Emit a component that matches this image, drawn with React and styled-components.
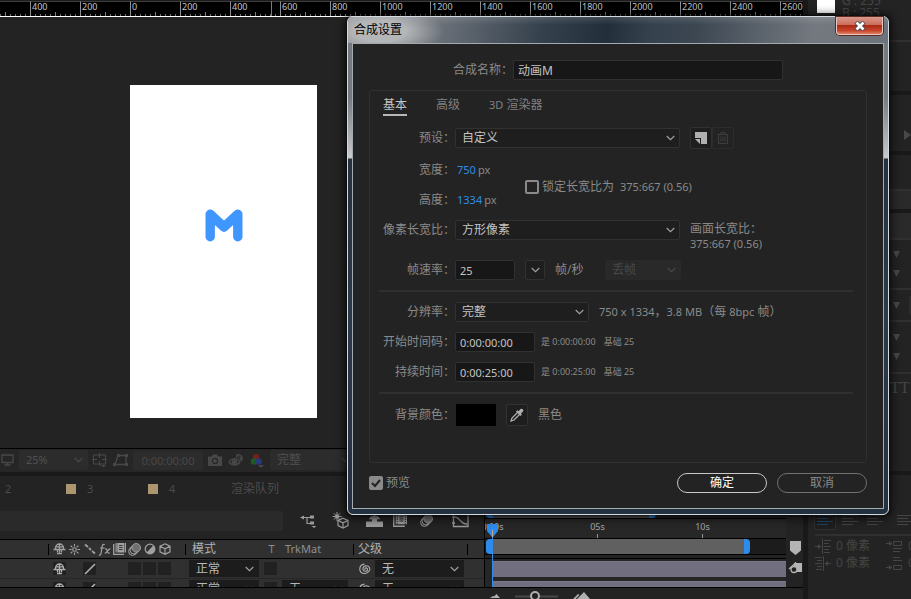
import { useState } from "react";
import styled, { createGlobalStyle, css } from "styled-components";

const GlobalStyle = createGlobalStyle`
  *, *::before, *::after {
    box-sizing: border-box;
  }
  body {
    margin: 0;
    background: #232323;
    overflow: hidden;
  }
  body, button, input, select {
    font-family: "Noto Sans", "Noto Sans CJK SC", sans-serif;
    font-size: 11px;
    line-height: 16px;
  }
  button, input, select {
    margin: 0;
    outline: none;
  }
  svg {
    display: block;
    flex: none;
  }
`;

const Page = styled.div`
  position: relative;
  display: flex;
  height: 100vh;
  color: #8a8a8a;
`;

const Main = styled.main`
  flex: 1;
  min-width: 0;
  display: flex;
  flex-direction: column;
  border-right: 5px solid #191919;
`;

/* ---------- viewer ---------- */

const Ruler = styled.div`
  position: relative;
  height: 17px;
  display: flex;
  overflow: hidden;
  background: #000;
  border-top: 1px solid #1c1c1c;
  border-bottom: 1px solid #fff;
`;

const RulerCell = styled.span`
  flex: none;
  width: 50px;
  height: 15px;
  padding-left: 1px;
  border-left: 1px solid #909090;
  border-top: 1px solid #3c3c3c;
  font-size: 9px;
  line-height: 9px;
  color: #c4c4c4;
  background: linear-gradient(#808080, #808080) 24px 100% / 1px 4px no-repeat,
    repeating-linear-gradient(90deg, transparent 0 4px, #707070 4px 5px) 0 100% / 100% 2px no-repeat;

  &:first-child {
    margin-left: -20px;
  }
`;

const RulerCursor = styled.i`
  position: absolute;
  left: 271px;
  top: 0;
  width: 1px;
  height: 100%;
  background: #2d8ceb;
`;

const Viewport = styled.div`
  flex: 1;
  min-height: 0;
  padding: 68px 0 0 130px;
`;

const Canvas = styled.div`
  width: 187px;
  height: 333px;
  padding-top: 124px;
  display: flex;
  justify-content: center;
  align-items: flex-start;
  background: #fff;
`;

const ViewerBar = styled.div`
  height: 28px;
  display: flex;
  align-items: center;
  gap: 4px;
  padding-bottom: 1px;
  border-top: 1px solid #000;
  border-bottom: 4px solid #191919;
  background: #262626;
  color: #484848;
`;

const BarIcon = styled.span`
  flex: none;
  width: ${({ $w }) => $w || 18}px;
  display: flex;
  justify-content: center;
`;

const BarTime = styled.span`
  flex: none;
  width: 70px;
  height: 19px;
  line-height: 19px;
  text-align: center;
  border-radius: 2px;
  background: #2c2c2c;
`;

/* ---------- form parts ---------- */

const fieldBox = css`
  height: 20px;
  border: 1px solid #313131;
  border-radius: 2px;
  background: #171717;
  color: #c4c4c4;
`;

const TextField = styled.input`
  ${fieldBox}
  width: ${({ $w }) => $w}px;
  padding: 0 4px;
  font-size: ${({ $cjk }) => ($cjk ? 12 : 11)}px;
`;

const SelectBox = styled.span`
  flex: none;
  display: grid;
  align-items: center;
  width: ${({ $w }) => $w}px;

  > * {
    grid-area: 1 / 1;
  }
  > svg {
    justify-self: end;
    margin-right: 5px;
    pointer-events: none;
  }
`;

const variants = {
  field: css`
    background: #1e1e1e;
    border-color: #313131;
    color: #c4c4c4;
  `,
  disabled: css`
    background: #292929;
    border-color: #292929;
    color: #484848;
    opacity: 1;
  `,
  bar: css`
    background: #2c2c2c;
    border-color: #2c2c2c;
    color: #505050;
  `,
  cell: css`
    height: 17px;
    background: #1c1c1c;
    border-color: #1c1c1c;
    border-radius: 0;
    color: #b8b8b8;
  `,
};

const NativeSelect = styled.select`
  ${fieldBox}
  width: 100%;
  padding: 0 18px 0 6px;
  font-size: ${({ $latin }) => ($latin ? 11 : 12)}px;
  line-height: 16px;
  appearance: none;
  ${({ $variant }) => variants[$variant]}
`;

const Chevron = ({ color = "#a0a0a0" }) => (
  <svg width="9" height="6" viewBox="0 0 9 6" fill="none" stroke={color} strokeWidth="1.2">
    <path d="M.7 1l3.8 3.6L8.3 1" />
  </svg>
);

const Select = ({ width, variant = "field", label, id, value, latin }) => {
  const dim = variant === "bar" || variant === "disabled";
  return (
    <SelectBox $w={width}>
      <NativeSelect
        id={id}
        aria-label={label}
        $variant={variant}
        $latin={latin}
        disabled={variant === "disabled"}
        defaultValue={value}
      >
        <option>{value}</option>
      </NativeSelect>
      <Chevron color={dim ? "#484848" : "#a0a0a0"} />
    </SelectBox>
  );
};

/* ---------- timeline ---------- */

const TabStrip = styled.div`
  height: 26px;
  display: flex;
  align-items: center;
  padding-left: 5px;
  color: #4c4c4c;
`;

const CompTab = styled.a`
  display: flex;
  align-items: center;
  gap: 11px;
  width: ${({ $w }) => $w}px;
  color: inherit;
  text-decoration: none;
  font-size: ${({ $cjk }) => ($cjk ? 12 : 11)}px;

  &::before {
    content: "";
    display: ${({ $swatch }) => ($swatch ? "block" : "none")};
    width: 10px;
    height: 10px;
    background: #ab9670;
  }
`;

const Timeline = styled.div`
  display: flex;
  height: 86px;
  border-bottom: 1px solid #000;
`;

const Layers = styled.div`
  flex: none;
  width: 485px;
  display: flex;
  flex-direction: column;
  overflow: hidden;
  border-right: 1px solid #000;
`;

const LayerTools = styled.div`
  height: 37px;
  flex: none;
  display: flex;
  align-items: center;
  color: #9a9a9a;
`;

const SearchField = styled.input`
  width: 283px;
  height: 20px;
  margin-right: 8px;
  border: 0;
  border-radius: 0 2px 2px 0;
  background: #2a2a2a;
  color: #b8b8b8;
`;

const columns = css`
  display: grid;
  grid-template-columns: 52px repeat(8, 15px) 17px 70px 4px 14px 5px 68px 5px 20px 89px 8px;
  align-items: center;
`;

const HeaderRow = styled.div`
  ${columns}
  flex: none;
  height: 20px;
  border-top: 1px solid #000;
  border-bottom: 1px solid #000;
  background: #303030;
  color: #a0a0a0;

  > svg {
    justify-self: center;
  }
`;

const Divider = styled.i`
  justify-self: ${({ $end }) => ($end ? "end" : "start")};
  width: 1px;
  height: 11px;
  margin: 0 3px;
  background: #000;
`;

const HeaderText = styled.span`
  padding-left: 3px;
  justify-self: ${({ $center }) => ($center ? "center" : "start")};
  font-size: ${({ $cjk }) => ($cjk ? 12 : 11)}px;
  white-space: nowrap;
  color: ${({ $cjk }) => ($cjk ? "#b0b0b0" : "#8e8e8e")};
`;

const LayerRow = styled.div`
  ${columns}
  flex: none;
  height: 20px;
  border-bottom: 1px solid #262626;
  background: #303030;
  color: #b0b0b0;
`;

const SwitchCell = styled.span`
  width: 13px;
  height: 13px;
  justify-self: center;
  display: grid;
  place-items: center;
  background: ${({ $plain }) => ($plain ? "none" : "#212121")};
`;

const Tracks = styled.div`
  position: relative;
  flex: 1;
  min-width: 0;
  display: flex;
  flex-direction: column;
  overflow: hidden;
`;

const Navigator = styled.div`
  flex: none;
  height: 17px;
  display: flex;
  align-items: flex-end;
  padding-left: 1px;
  border-bottom: 1px solid #000;

  &::before {
    content: "";
    width: 170px;
    height: 8px;
    border: solid #2d8ceb;
    border-width: 0 7px;
    border-radius: 4px;
    background: #555;
  }
`;

const TimeRuler = styled.div`
  flex: none;
  height: 20px;
  display: flex;
  border-bottom: 1px solid #000;
  background: #272727;
`;

const TimeMark = styled.span`
  flex: none;
  width: 105px;
  display: flex;
  flex-direction: column;
  align-items: center;
  font-size: 9px;
  line-height: 15px;
  color: #a8a8a8;

  &::after {
    content: "";
    width: 1px;
    height: 4px;
    background: #909090;
  }
  &:first-child {
    margin-left: -45px;
  }
`;

const WorkArea = styled.div`
  flex: none;
  height: 16px;
  padding-left: 1px;
  border-bottom: 1px solid #000;
  background: #1c1c1c;

  &::before {
    content: "";
    display: block;
    width: 264px;
    height: 15px;
    border: solid #2d8ceb;
    border-width: 0 6px;
    border-radius: 4px;
    background: #606060;
  }
`;

const TrackRow = styled.div`
  flex: none;
  height: ${({ $gap }) => 16 + $gap}px;
  padding: ${({ $gap }) => $gap}px 0 0 7px;
  background: #262626;

  &::before {
    content: "";
    display: block;
    height: 16px;
    background: #716e80;
    border-top: 1px solid #7a778a;
  }
`;

const TrackGap = styled.i`
  flex: none;
  height: 4px;
  border-bottom: 1px solid #000;
`;

const Playhead = styled.svg`
  position: absolute;
  left: 1px;
  top: 22px;
`;

const MarkerRail = styled.div`
  flex: none;
  width: 17px;
  padding: 39px 0 0 1px;
  display: flex;
  flex-direction: column;
  align-items: center;
  gap: 6px;
  color: #b4b4b4;
`;

const ZoomBar = styled.div`
  height: 11px;
  flex: none;
  display: flex;
  align-items: flex-end;
  gap: 15px;
  padding-left: 490px;
  overflow: hidden;
  color: #b0b0b0;
`;

/* ---------- side panels ---------- */

const Side = styled.aside`
  flex: none;
  width: 103px;
  display: flex;
  flex-direction: column;
  overflow: hidden;
  color: #454545;
`;

const SidePanel = styled.section`
  flex: none;
  height: ${({ $h }) => $h}px;
  display: flex;
  flex-direction: column;
  justify-content: space-evenly;
  padding: ${({ $low }) => ($low ? 24 : 0)}px 0 0 85px;
  border-bottom: ${({ $edge }) => ($edge ? "4px solid #191919" : "2px solid #303030")};
  background: ${({ $light }) => ($light ? "#2a2a2a" : "none")};
`;

const ToggleLine = styled.div`
  display: flex;
  align-items: center;
  gap: 8px;

  &::after {
    content: "";
    flex: 1;
    height: 19px;
    border-radius: 2px 0 0 2px;
    background: #2c2c2c;
  }
`;

const ColorReadout = styled.section`
  flex: none;
  height: 42px;
  display: flex;
  gap: 7px;
  padding-left: 9px;
  border-bottom: 2px solid #303030;
  line-height: 12px;
`;

const ColorChip = styled.i`
  width: 18px;
  height: 13px;
  background: #fff;
`;

const ChannelList = styled.div`
  margin-top: -5px;
  font-size: 12px;
`;

const TypeRow = styled.div`
  flex: none;
  height: 101px;
  padding: 6px 0 0 82px;
  border-bottom: 4px solid #191919;
  font: 16px/16px "Liberation Serif", serif;
`;

const AlignRow = styled.div`
  flex: none;
  height: 59px;
  display: flex;
  align-items: flex-end;
  gap: 3px;
  padding: 0 0 4px 6px;

  > :last-child {
    margin-left: 5px;
  }
`;

const AlignButton = styled.button`
  flex: none;
  width: 22px;
  height: 20px;
  padding: 0;
  display: grid;
  place-items: center;
  border: 1px solid ${({ $on }) => ($on ? "#303030" : "transparent")};
  border-radius: 2px;
  background: ${({ $on }) => ($on ? "#1e1e1e" : "none")};
  color: ${({ $on }) => ($on ? "#1c4566" : "#454545")};
`;

const IndentGrid = styled.div`
  display: grid;
  grid-template-columns: 16px 45px 17px 14px;
  gap: 1px 5px;
  align-items: center;
  margin-left: 7px;
  border-top: 2px solid #303030;
  padding-top: 2px;
  font-size: 12px;
`;

/* ---------- dialog ---------- */

const Dialog = styled.section`
  position: absolute;
  left: 347px;
  top: 16px;
  width: 542px;
  padding: 0 4px 5px;
  border: 1px solid #d4dade;
  border-radius: 6px;
  box-shadow: 0 0 2px #000, 0 1px 10px 2px rgba(0, 0, 0, 0.75);
  background: linear-gradient(#747a80 0, #757a80 80px, #c8cacc 141px, #243240 142px, #2b3a48 60%, #233040 100%);
`;

const TitleBar = styled.header`
  display: flex;
  justify-content: space-between;
  align-items: flex-start;
  height: 26px;
  margin: 0 -4px;
  padding: 0 5px 0 6px;
  border-radius: 5px 5px 0 0;
  color: #000;
  background: radial-gradient(ellipse 64px 26px at 32px 14px, #b4b6b8 40%, transparent),
    linear-gradient(180deg, rgba(255, 255, 255, 0.12), transparent 30%),
    linear-gradient(100deg, #868a8e 0, #686e76 18%, #35414d 36%, #222e3a 48%, #35414d 56%, #3b4651 64%, #747980 86%, #6d737a 100%);
`;

const Title = styled.h1`
  margin: 0;
  font-size: 12px;
  font-weight: 400;
  line-height: 26px;
`;

const CloseButton = styled.button`
  width: 47px;
  height: 18px;
  padding: 0;
  display: grid;
  place-items: center;
  border: 1px solid #e6c8c2;
  border-top: 0;
  border-radius: 0 0 4px 4px;
  box-shadow: 0 0 0 1px #5a2a24;
  background: linear-gradient(#d99a8c 0, #cc6a58 48%, #ab2a14 50%, #c8452c 80%, #dd7f60 100%);
`;

const Client = styled.div`
  padding: 16px 16px 15px;
  border: 1px solid #a4abb0;
  background: #232323;
`;

const NameRow = styled.div`
  display: grid;
  grid-template-columns: 144px auto;
  justify-content: start;
  align-items: center;
  margin-bottom: 10px;
`;

const Label = styled.label`
  font-size: 12px;
  text-align: right;
  white-space: nowrap;
`;

const Group = styled.div`
  border: 1px solid #303030;
  border-radius: 3px;
  height: 373px;
  padding: 4px 13px 0 9px;
`;

const Tabs = styled.div`
  display: flex;
  gap: 29px;
  padding-left: 4px;
  margin-bottom: 12px;
`;

const Tab = styled.button`
  padding: 0;
  height: 21px;
  border: 0;
  border-bottom: 2px solid ${({ $on }) => ($on ? "#b8b8b8" : "transparent")};
  background: none;
  color: ${({ $on }) => ($on ? "#c4c4c4" : "#808080")};
  font-size: 12px;
`;

const Row = styled.div`
  display: grid;
  grid-template-columns: 76px 1fr;
  align-items: center;
  align-content: center;
  height: ${({ $h }) => $h || 20}px;
  margin-bottom: ${({ $gap }) => $gap || 10}px;
`;

const Fields = styled.div`
  display: flex;
  align-items: center;
  gap: 10px;
`;

const SizeBlock = styled.div`
  display: grid;
  grid-template-columns: 146px auto;
  justify-content: start;
  align-items: center;

  > label {
    margin-bottom: 6px;
  }
`;

const HotValue = styled.input`
  field-sizing: content;
  padding: 0 0 0 2px;
  border: 0;
  background: none;
  color: #2d8ceb;
`;

const Unit = styled.span`
  margin-left: -8px;
`;

const Text = styled.span`
  font-size: 12px;
  white-space: nowrap;
`;

const AspectInfo = styled.div`
  padding-top: 12px;
  font-size: 12px;
  line-height: 15px;
  white-space: nowrap;
`;

const Num = styled.span`
  font-size: 11px;
`;

const Note = styled.span`
  display: flex;
  gap: 8px;
  margin-left: -4px;
  font-size: 9px;
  white-space: nowrap;
`;

const Rule = styled.hr`
  height: 2px;
  margin: 0 0 10px;
  border: 0;
  background: #303030;
`;

const Check = styled.label`
  display: flex;
  align-items: center;
  gap: 3px;
  font-size: 12px;
  white-space: nowrap;
`;

const CheckInput = styled.input`
  appearance: none;
  width: 14px;
  height: 14px;
  border: 2px solid #8a8a8a;
  border-radius: 2px;

  &:checked {
    background: #8a8a8a
      url("data:image/svg+xml,%3Csvg xmlns='http://www.w3.org/2000/svg' width='10' height='10' fill='none' stroke='%23222' stroke-width='2'%3E%3Cpath d='M1 5l3 3 5-6'/%3E%3C/svg%3E")
      center no-repeat;
  }
`;

const IconButton = styled.button`
  flex: none;
  width: ${({ $w }) => $w || 22}px;
  height: ${({ $w }) => $w || 22}px;
  padding: 0;
  display: grid;
  place-items: center;
  border: 1px solid ${({ $dim }) => ($dim ? "#2c2c2c" : "#313131")};
  border-radius: 2px;
  background: ${({ $dim }) => ($dim ? "#232323" : "#1e1e1e")};
  color: ${({ $dim }) => ($dim ? "#3e3e3e" : "#b0b0b0")};
`;

const ButtonPair = styled.div`
  display: flex;
`;

const Swatch = styled.button`
  width: 40px;
  height: 22px;
  margin-left: 1px;
  padding: 0;
  border: 0;
  background: #000;
`;

const Footer = styled.footer`
  display: flex;
  align-items: center;
  gap: 10px;
  margin-top: 10px;

  > :first-child {
    margin-right: auto;
  }
`;

const PillButton = styled.button`
  width: 90px;
  height: 20px;
  padding: 0;
  border: ${({ $primary }) => ($primary ? "1px solid #c8c8c8" : "1px solid #707070")};
  border-radius: 10px;
  background: none;
  color: ${({ $primary }) => ($primary ? "#fff" : "#8a8a8a")};
  font-size: 12px;
`;

/* ---------- icons ---------- */

const Glyph = ({ w = 14, h = w, children, ...rest }) => (
  <svg
    width={w}
    height={h}
    viewBox={`0 0 ${w} ${h}`}
    fill="none"
    stroke="currentColor"
    strokeWidth="1.3"
    aria-hidden="true"
    {...rest}
  >
    {children}
  </svg>
);

const ShyIcon = () => (
  <Glyph w={13} h={12}>
    <path d="M2.5 6V4.8a4 3.8 0 018 0V6M6.5 1v10M2.5 3.8h8M.5 6.5h12M4.5 6.5v3M8.5 6.5v3M4 10.6h5" />
  </Glyph>
);

const SunIcon = () => (
  <Glyph w={11} strokeWidth="1.1">
    <circle cx="5.5" cy="5.5" r="1.8" />
    <path d="M5.5 0v2.6M5.5 8.4V11M0 5.5h2.6M8.4 5.5H11M1.6 1.6l1.8 1.8M7.6 7.6l1.8 1.8M9.4 1.6L7.6 3.4M3.4 7.6L1.6 9.4" />
  </Glyph>
);

const QualityIcon = () => (
  <Glyph w={12} strokeWidth="1.8">
    <path d="M1 1.5l3 2.5M5 5l2 2M8 8l3 2.5" />
  </Glyph>
);

const SlashIcon = () => (
  <Glyph w={12} strokeWidth="1.6">
    <path d="M1 11L11 1" />
  </Glyph>
);

const FxIcon = () => (
  <Glyph w={13} h={13} strokeWidth="1.2">
    <path d="M6.8 1.6C5.4.8 4.6 1.6 4.3 3L3 10.4C2.7 12 1.8 12.4.8 12M2 5h4.6M7 6c1.6-.8 1.8.6 2.4 2.4.5 1.8 1 2.2 2.4 1.4M12.4 5.6C10.2 6 9 9.4 6.8 10.4" />
  </Glyph>
);

const FilmIcon = ({ w = 13 }) => (
  <Glyph w={13} h={12} width={w} height={w - 1}>
    <path d="M.7 1v10.3H11" />
    <rect x="2.5" y="0" width="10.5" height="9.5" fill="currentColor" stroke="none" />
    <path d="M4 .5v9M11.5.5v9" stroke="#262626" strokeWidth="1" strokeDasharray="1 1" />
    <path d="M6 2.5h3.6M6 4.5h3.6M6 6.5h3.6" stroke="#383838" strokeWidth="1" />
  </Glyph>
);

const BlurIcon = () => (
  <Glyph w={13} h={13} strokeWidth="1">
    <circle cx="4.6" cy="8.4" r="4" />
    <circle cx="6" cy="7" r="4" />
    <circle cx="8.2" cy="4.8" r="4.3" fill="#707070" />
  </Glyph>
);

const AdjustIcon = () => (
  <Glyph w={12}>
    <circle cx="6" cy="6" r="4.8" />
    <path d="M2.6 9.4a4.8 4.8 0 006.8-6.8z" fill="currentColor" stroke="none" />
  </Glyph>
);

const CubeIcon = () => (
  <Glyph w={12} strokeWidth="1.2">
    <path d="M6 .8l5 2.4v5.6L6 11.3 1 8.8V3.2zM1 3.2l5 2.6 5-2.6M6 5.8v5.5" />
  </Glyph>
);

const SwirlIcon = () => (
  <Glyph w={13} h={12} strokeWidth="1.1">
    <path d="M6.3 6.6c-1-.6-.2-2 1-1.7 1.9.5 1.5 3.4-.8 3.4-3.6 0-3.6-5.4.6-5.6 3.3 0 4.5 2.9 3.2 5.1-1.2 2-3.2 3-5.3 2.7C2.5 10.2.8 8.3.8 6c0-2.7 2-4.6 4.6-4.9" />
  </Glyph>
);

const FlowIcon = () => (
  <Glyph w={17} h={14} strokeWidth="1.2">
    <path d="M2 3.5h9M8 3.5v6h4" />
    <path d="M1 3.5l4-2v4zM11 1.4h4v3.2h-4zM11 7.4h4v3.2h-4zM12.5 12h5l-2.5 2z" fill="currentColor" stroke="none" />
  </Glyph>
);

const DraftIcon = () => (
  <Glyph w={17} h={17} strokeWidth="1.2">
    <path d="M5 0v9M.6 4.5h9M2 1.4l6 6.2M8 1.4L2 7.6" strokeWidth="1" />
    <circle cx="5" cy="4.5" r="2" fill="currentColor" stroke="none" />
    <path d="M11 6.2l5 2.2v5.2l-5 2.4-5-2.4V8.4z" fill="#232323" />
    <path d="M6 8.4l5 2.4 5-2.4M11 10.8V16" />
  </Glyph>
);

const ShyToolIcon = () => (
  <Glyph w={17} h={14}>
    <path d="M0 7.5h6V5h5v2.5h6V13H0z" fill="currentColor" stroke="none" />
    <path d="M4 4.5a5 4 0 019 0zM8.5 1v10" />
  </Glyph>
);

const GraphIcon = () => (
  <Glyph w={17} h={14}>
    <path d="M1.5 0v12.5H16V0M0 3h3M0 9h3" />
    <path d="M3 3c5 0 5 7 12 7" />
  </Glyph>
);

const AlignIcon = () => (
  <Glyph w={16} h={10} strokeWidth="1" shapeRendering="crispEdges">
    <path d="M0 .5h16M0 3.5h11M0 6.5h16M0 9.5h11" />
  </Glyph>
);

const IndentIcon = ({ flip }) => (
  <Glyph w={16} h={15} strokeWidth="1" transform={flip ? "scale(-1 1)" : undefined}>
    <path d="M0 7.5h5M7.5 0v15M9 1.5h7M9 4.5h5M9 7.5h7M9 10.5h5M9 13.5h6" />
    <path d="M3 5l3.4 2.5L3 10z" fill="currentColor" stroke="none" />
  </Glyph>
);

const SpaceIcon = ({ flip }) => (
  <Glyph w={17} h={15} strokeWidth="1">
    {flip ? (
      <>
        <path d="M0 11.5h4M7.5 9.5h8v4h-8zM7 1.5h7M7 4.5h9" />
        <path d="M3 9l3.4 2.5L3 14z" fill="currentColor" stroke="none" />
      </>
    ) : (
      <>
        <path d="M0 4.5h4M7.5 2.5h8v4h-8zM7 9.5h9M7 12.5h7" />
        <path d="M3 2l3.4 2.5L3 7z" fill="currentColor" stroke="none" />
      </>
    )}
  </Glyph>
);

const Triangle = () => (
  <svg width="8" height="7" viewBox="0 0 8 7" fill="#484848">
    <path d="M0 0h7L3.5 7z" />
  </svg>
);

/* ---------- sections ---------- */

const RULER_MARKS = ["", 400, 200, 0, 200, 400, 600, 800, 1000, 1200, 1400, 1600, 1800, 2000, 2200, 2400, 2600];

const Viewer = () => (
  <>
    <Ruler>
      {RULER_MARKS.map((mark, i) => (
        <RulerCell key={i}>{mark}</RulerCell>
      ))}
      <RulerCursor />
    </Ruler>
    <Viewport>
      <Canvas>
        <svg width="38" height="33" viewBox="0 0 38 33" fill="none" role="img" aria-label="M">
          <path
            d="M5.2 27.8V5.2L19 18 32.8 5.2v22.6"
            stroke="#4096ff"
            strokeWidth="9.4"
            strokeLinecap="round"
            strokeLinejoin="round"
          />
        </svg>
      </Canvas>
    </Viewport>
    <ViewerBar>
      <BarIcon $w={15}>
        <Glyph w={13} h={12}>
          <path d="M1 1h11v7.5H1zM6.5 8.5V11M3.5 11h6" />
        </Glyph>
      </BarIcon>
      <Select width={69} variant="bar" label="放大率" value="25%" latin />
      <BarIcon $w={15}>
        <Glyph w={15} h={15}>
          <path d="M1.5 2h12v9h-12zM7.5 0v5M7.5 8v5M0 6.5h5M10 6.5h5" strokeWidth="1" />
          <path d="M9 12h5l-2.5 2.5z" fill="currentColor" stroke="none" />
        </Glyph>
      </BarIcon>
      <BarIcon>
        <Glyph w={15} h={14}>
          <path d="M2 11.5L5 2.5h8v9z" />
          <path d="M0 10h3v3H0zM4 1h3v3H4zM12 1h3v3h-3zM12 10h3v3h-3z" fill="currentColor" stroke="none" />
        </Glyph>
      </BarIcon>
      <BarTime>0:00:00:00</BarTime>
      <BarIcon $w={15}>
        <Glyph w={14} h={12}>
          <path d="M0 2.5h4L5 .5h4l1 2h4V12H0z" fill="currentColor" stroke="none" />
          <circle cx="7" cy="7" r="2.6" stroke="#262626" />
        </Glyph>
      </BarIcon>
      <BarIcon>
        <Glyph w={15} h={14}>
          <path d="M1 9c3-4.5 8-4.5 11 0-3 4-8 4-11 0z" />
          <circle cx="6.5" cy="9" r="2" fill="currentColor" />
          <path d="M8 2.5L9 1h3l1 1.5h1.5V8H13C12 6 10.5 5 8 4.5z" fill="currentColor" stroke="none" />
          <circle cx="11" cy="4" r="1.2" stroke="#262626" strokeWidth="1" />
        </Glyph>
      </BarIcon>
      <BarIcon>
        <Glyph w={14} h={15} stroke="none">
          <circle cx="6" cy="4" r="3" fill="#7a1f1c" />
          <circle cx="4" cy="8.5" r="3.2" fill="#1f5a22" />
          <circle cx="8.5" cy="8.5" r="3.2" fill="#283a78" />
          <path d="M8 12h6l-3 3z" fill="currentColor" />
        </Glyph>
      </BarIcon>
      <Select width={85} variant="bar" label="分辨率" value="完整" />
    </ViewerBar>
  </>
);

const Layer = ({ matte }) => (
  <LayerRow>
    <i />
    <SwitchCell>
      <ShyIcon />
    </SwitchCell>
    <i />
    <SwitchCell>
      <SlashIcon />
    </SwitchCell>
    <i />
    <i />
    <SwitchCell />
    <SwitchCell />
    <SwitchCell />
    <i />
    <Select width={70} variant="cell" label="模式" value="正常" />
    <i />
    <SwitchCell />
    <i />
    {matte ? <Select width={66} variant="cell" label="TrkMat" value="无" /> : <i />}
    <i />
    <SwitchCell $plain>
      <SwirlIcon />
    </SwitchCell>
    <Select width={89} variant="cell" label="父级" value="无" />
  </LayerRow>
);

const TimelinePanel = () => (
  <>
    <TabStrip>
      <CompTab href="#2" $w={61}>2</CompTab>
      <CompTab href="#3" $w={82} $swatch>3</CompTab>
      <CompTab href="#4" $w={83} $swatch>4</CompTab>
      <CompTab href="#queue" $cjk>渲染队列</CompTab>
    </TabStrip>
    <Timeline>
      <Layers>
        <LayerTools>
          <SearchField aria-label="搜索" />
          <BarIcon $w={32}><FlowIcon /></BarIcon>
          <BarIcon $w={34}><DraftIcon /></BarIcon>
          <BarIcon $w={34}><ShyToolIcon /></BarIcon>
          <BarIcon $w={18}><FilmIcon w={14} /></BarIcon>
          <BarIcon $w={34}><BlurIcon /></BarIcon>
          <BarIcon $w={34}><GraphIcon /></BarIcon>
        </LayerTools>
        <HeaderRow>
          <Divider $end />
          <ShyIcon />
          <SunIcon />
          <QualityIcon />
          <FxIcon />
          <FilmIcon />
          <BlurIcon />
          <AdjustIcon />
          <CubeIcon />
          <Divider $end />
          <HeaderText $cjk>模式</HeaderText>
          <i />
          <HeaderText $center>T</HeaderText>
          <i />
          <HeaderText>TrkMat</HeaderText>
          <Divider />
          <HeaderText $cjk>父级</HeaderText>
          <i />
          <Divider />
        </HeaderRow>
        <Layer />
        <Layer matte />
      </Layers>
      <Tracks>
        <Navigator />
        <TimeRuler>
          <TimeMark>0:00s</TimeMark>
          <TimeMark>05s</TimeMark>
          <TimeMark>10s</TimeMark>
        </TimeRuler>
        <WorkArea />
        <TrackGap />
        <TrackRow $gap={2} />
        <TrackRow $gap={4} />
        <Playhead width="13" height="64" viewBox="0 0 13 64" fill="#2d8ceb">
          <path d="M1 0h11v7L7 13v51H6V13L1 7z" />
          <path d="M6 6h1v7H6z" fill="#c0a890" />
        </Playhead>
      </Tracks>
      <MarkerRail>
        <svg width="11" height="14" viewBox="0 0 11 14" fill="currentColor">
          <path d="M0 0h11v9.5L5.5 14 0 9.5z" />
        </svg>
        <Glyph w={14} h={13}>
          <path d="M6 2h8v9H6z" fill="currentColor" stroke="none" />
          <path d="M7.5 1v5M1 8l6.5-6" />
          <circle cx="6" cy="8.5" r="3" fill="#232323" />
        </Glyph>
      </MarkerRail>
    </Timeline>
    <ZoomBar>
      <Glyph w={10} h={5} stroke="none" fill="currentColor">
        <path d="M0 4l3-2 1 .5L6.5 0 10 4z" />
      </Glyph>
      <Glyph w={43} h={9}>
        <path d="M0 6.5h15M25 6.5h18" stroke="#484848" strokeWidth="2" />
        <circle cx="20" cy="6" r="4" strokeWidth="2" />
      </Glyph>
      <Glyph w={17} h={7} stroke="none" fill="currentColor">
        <path d="M0 7l5-5 1.5 1L2.5 7zM4 7l7-7 6 7z" />
      </Glyph>
    </ZoomBar>
  </>
);

const SidePanels = () => (
  <Side>
    <ColorReadout>
      <ColorChip />
      <ChannelList>
        <div>G : 255</div>
        <div>B : 255</div>
      </ChannelList>
    </ColorReadout>
    <SidePanel $h={53} $edge />
    <SidePanel $h={60} $edge $low>
      <svg width="18" height="10" viewBox="0 0 18 10" fill="#484848">
        <path d="M11 0l7 5-7 5z" />
      </svg>
    </SidePanel>
    <SidePanel $h={36} />
    <SidePanel $h={22} $edge $light />
    <SidePanel $h={27} $light />
    <SidePanel $h={50}><Triangle /><Triangle /></SidePanel>
    <SidePanel $h={32}><ToggleLine><Triangle /></ToggleLine></SidePanel>
    <SidePanel $h={52}><Triangle /><Triangle /></SidePanel>
    <TypeRow>TT</TypeRow>
    <AlignRow>
      <AlignButton $on aria-label="左对齐"><AlignIcon /></AlignButton>
      <AlignButton aria-label="居中"><AlignIcon /></AlignButton>
      <AlignButton aria-label="右对齐"><AlignIcon /></AlignButton>
      <AlignButton aria-label="两端对齐"><AlignIcon /></AlignButton>
    </AlignRow>
    <IndentGrid>
      <IndentIcon />
      <span>0 像素</span>
      <SpaceIcon />
      <span>0</span>
      <IndentIcon flip />
      <span>0 像素</span>
      <SpaceIcon flip />
      <span>0</span>
    </IndentGrid>
  </Side>
);

const CompositionSettings = () => {
  const [locked, setLocked] = useState(false);
  const [preview, setPreview] = useState(true);

  return (
    <Dialog role="dialog" aria-labelledby="dialog-title">
      <TitleBar>
        <Title id="dialog-title">合成设置</Title>
        <CloseButton aria-label="关闭">
          <svg width="12" height="10" viewBox="0 0 12 10">
            <path d="M2 1l8 8M10 1L2 9" stroke="#4a4a5a" strokeWidth="4.4" />
            <path d="M2.5 1.5l7 7M9.5 1.5l-7 7" stroke="#fff" strokeWidth="2.6" />
          </svg>
        </CloseButton>
      </TitleBar>
      <Client>
        <NameRow>
          <Label htmlFor="comp-name">合成名称：</Label>
          <TextField id="comp-name" $w={270} $cjk defaultValue="动画M" />
        </NameRow>
        <Group>
          <Tabs>
            <Tab $on>基本</Tab>
            <Tab>高级</Tab>
            <Tab><Num>3D</Num> 渲染器</Tab>
          </Tabs>
          <Row $gap={12}>
            <Label htmlFor="preset">预设：</Label>
            <Fields>
              <Select id="preset" width={225} value="自定义" />
              <ButtonPair>
                <IconButton aria-label="新建预设">
                  <svg width="12" height="12" viewBox="0 0 12 12" fill="currentColor">
                    <path d="M0 0h12v12H6V6H0z" />
                    <path d="M0 7h5v5z" />
                  </svg>
                </IconButton>
                <IconButton $dim aria-label="删除预设">
                  <Glyph w={12} strokeWidth="1">
                    <path d="M.5 2.5h11M4 2.5v-2h4v2M1.5 3v8.5h9V3M4 4.5v5M6 4.5v5M8 4.5v5" />
                  </Glyph>
                </IconButton>
              </ButtonPair>
            </Fields>
          </Row>
          <SizeBlock>
            <div>
              <Row>
                <Label htmlFor="width">宽度：</Label>
                <Fields>
                  <HotValue id="width" defaultValue="750" />
                  <Unit>px</Unit>
                </Fields>
              </Row>
              <Row>
                <Label htmlFor="height">高度：</Label>
                <Fields>
                  <HotValue id="height" defaultValue="1334" />
                  <Unit>px</Unit>
                </Fields>
              </Row>
            </div>
            <Check>
              <CheckInput type="checkbox" checked={locked} onChange={() => setLocked(!locked)} />
              <span>锁定长宽比为</span>
              <Num>&nbsp;375:667 (0.56)</Num>
            </Check>
          </SizeBlock>
          <Row $gap={20}>
            <Label htmlFor="pixel-aspect">像素长宽比：</Label>
            <Fields>
              <Select id="pixel-aspect" width={225} value="方形像素" />
              <AspectInfo>
                <div>画面长宽比：</div>
                <Num>375:667 (0.56)</Num>
              </AspectInfo>
            </Fields>
          </Row>
          <Row>
            <Label htmlFor="frame-rate">帧速率：</Label>
            <Fields>
              <TextField id="frame-rate" $w={60} defaultValue="25" />
              <IconButton $w={20} aria-label="帧速率选项"><Chevron /></IconButton>
              <SelectBox $w={40}><Text>帧/秒</Text></SelectBox>
              <Select width={76} variant="disabled" label="丢帧" value="丢帧" />
            </Fields>
          </Row>
          <Rule />
          <Row>
            <Label htmlFor="resolution">分辨率：</Label>
            <Fields>
              <Select id="resolution" width={134} value="完整" />
              <Text>
                <Num>750 x 1334</Num>，<Num>3.8 MB</Num>（每 <Num>8bpc</Num> 帧）
              </Text>
            </Fields>
          </Row>
          <Row>
            <Label htmlFor="start">开始时间码：</Label>
            <Fields>
              <TextField id="start" $w={80} defaultValue="0:00:00:00" />
              <Note><span>是 0:00:00:00</span><span>基础 25</span></Note>
            </Fields>
          </Row>
          <Row>
            <Label htmlFor="duration">持续时间：</Label>
            <Fields>
              <TextField id="duration" $w={80} defaultValue="0:00:25:00" />
              <Note><span>是 0:00:25:00</span><span>基础 25</span></Note>
            </Fields>
          </Row>
          <Rule />
          <Row $h={22}>
            <Label as="span">背景颜色：</Label>
            <Fields>
              <Swatch aria-label="背景颜色" />
              <IconButton aria-label="吸管">
                <Glyph w={14}>
                  <path d="M7.5 4.5L2 10l-1 3 3-1 5.5-5.5" />
                  <path d="M6 3.5l1.2-1.2 1.5 1L10.5 1a1.8 1.8 0 012.5 2.5L11 5.5l.8 1.3L10.5 8z" fill="currentColor" stroke="none" />
                </Glyph>
              </IconButton>
              <Text>黑色</Text>
            </Fields>
          </Row>
        </Group>
        <Footer>
          <Check>
            <CheckInput type="checkbox" checked={preview} onChange={() => setPreview(!preview)} />
            预览
          </Check>
          <PillButton $primary>确定</PillButton>
          <PillButton>取消</PillButton>
        </Footer>
      </Client>
    </Dialog>
  );
};

const App = () => (
  <>
    <GlobalStyle />
    <Page>
      <Main>
        <Viewer />
        <TimelinePanel />
      </Main>
      <SidePanels />
      <CompositionSettings />
    </Page>
  </>
);

export default App;
